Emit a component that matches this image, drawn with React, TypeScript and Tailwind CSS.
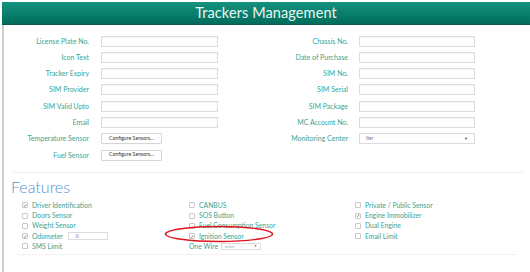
import React from "react";

const leftFields = [
  "License Plate No.",
  "Icon Text",
  "Tracker Expiry",
  "SIM Provider",
  "SIM Valid Upto",
  "Email",
];

const rightFields = [
  "Chassis No.",
  "Date of Purchase",
  "SIM No.",
  "SIM Serial",
  "SIM Package",
  "MC Account No.",
];

function Check({ checked }: { checked?: boolean }) {
  return (
    <span className="w-[6px] h-[6px] border border-[#c9c9c9] rounded-[1px] bg-white flex items-center justify-center shrink-0">
      {checked && (
        <svg width="5" height="5" viewBox="0 0 10 10">
          <path d="M1.5 5.5 L4 8 L8.5 2" fill="none" stroke="#555" strokeWidth="1.6" />
        </svg>
      )}
    </span>
  );
}

function Feature({ label, checked, children }: { label: string; checked?: boolean; children?: React.ReactNode }) {
  return (
    <div className="h-[10.3px] flex items-center gap-[4px]">
      <Check checked={checked} />
      <span className="text-[6.8px] text-[#3aa493] leading-none">{label}</span>
      {children}
    </div>
  );
}

function Label({ text, w }: { text: string; w: string }) {
  return (
    <span className={`${w} text-right text-[7px] leading-none text-[#3aa493] shrink-0`}>{text}</span>
  );
}

export default function App() {
  return (
    <div className="w-[530px] h-[272px] bg-white overflow-hidden font-['Lato','Liberation_Sans',sans-serif] pt-[2px] pl-[2px]">
      {/* Header */}
      <div className="h-[23px] bg-gradient-to-b from-[#14937f] to-[#026c5c] border-b-[1.5px] border-[#0a5a50] flex items-center justify-center">
        <h1 className="text-[14.5px] text-[#eaf6f3] leading-none tracking-[0.1px]">Trackers Management</h1>
      </div>

      <div className="border-l-2 border-[#cfcfcf] h-[250px] relative">
        {/* Form */}
        <div className="flex pt-[10.5px]">
          <div className="w-[216px] flex flex-col gap-y-[5.3px]">
            {leftFields.map((f) => (
              <div key={f} className="flex items-center h-[11px]">
                <Label text={f} w="w-[85px]" />
                <div className="ml-[12px] w-[117px] h-[11px] border border-[#dcdcdc] shadow-[inset_0_1px_1px_rgba(0,0,0,0.05)]" />
              </div>
            ))}
            {["Temperature Sensor", "Fuel Sensor"].map((f) => (
              <div key={f} className="flex items-center h-[11px]">
                <Label text={f} w="w-[85px]" />
                <button className="ml-[12px] w-[61px] h-[11px] border border-[#d5d5d5] rounded-[1px] bg-white text-[5.2px] text-[#333] leading-none">
                  Configure Sensors...
                </button>
              </div>
            ))}
          </div>
          <div className="flex flex-col gap-y-[5.3px]">
            {rightFields.map((f) => (
              <div key={f} className="flex items-center h-[11px]">
                <Label text={f} w="w-[128px]" />
                <div className="ml-[11px] w-[116px] h-[11px] border border-[#dcdcdc] shadow-[inset_0_1px_1px_rgba(0,0,0,0.05)]" />
              </div>
            ))}
            <div className="flex items-center h-[11px]">
              <Label text="Monitoring Center" w="w-[128px]" />
              <div className="ml-[11px] w-[116px] h-[11px] border border-[#dcdcdc] flex items-center justify-between px-[6px]">
                <span className="text-[5px] text-[#777] leading-none">Iter</span>
                <span className="text-[4px] text-[#444] leading-none">▼</span>
              </div>
            </div>
          </div>
        </div>

        {/* Separator */}
        <div className="mt-[11px] ml-[8px] w-[512px] border-t border-[#efefef]" />

        {/* Features */}
        <h2 className="ml-[7px] mt-[6px] text-[16px] leading-none text-[#4f93d2] font-light">Features</h2>

        <div className="mt-[5.5px] grid grid-cols-[167px_166px_1fr] pl-[18px]">
          <div className="flex flex-col">
            <Feature label="Driver Identification" checked />
            <Feature label="Doors Sensor" />
            <Feature label="Weight Sensor" />
            <Feature label="Odometer" checked>
              <span className="ml-[1px] w-[40px] h-[8.5px] border border-[#dcdcdc] flex items-center pl-[7px] text-[5px] text-[#777] leading-none">0</span>
            </Feature>
            <Feature label="SMS Limit" />
          </div>
          <div className="flex flex-col relative">
            <Feature label="CANBUS" />
            <Feature label="SOS Button" />
            <Feature label="Fuel Consumption Sensor" />
            <Feature label="Ignition Sensor" checked />
            <div className="h-[10.3px] flex items-center gap-[3px]">
              <span className="text-[6.8px] text-[#3aa493] leading-none">One Wire</span>
              <div className="w-[40px] h-[6.5px] border border-[#dcdcdc] flex items-center justify-between px-[3px]">
                <span className="text-[3.6px] text-[#999] leading-none">select</span>
                <span className="text-[3px] text-[#444] leading-none">▼</span>
              </div>
            </div>
            {/* highlight ellipse */}
            <svg className="absolute left-[-25px] top-[24.5px]" width="110" height="18" viewBox="0 0 110 18">
              <ellipse cx="55" cy="9" rx="53.5" ry="7.5" fill="none" stroke="#e0141e" strokeWidth="1.4" />
            </svg>
          </div>
          <div className="flex flex-col">
            <Feature label="Private / Public Sensor" />
            <Feature label="Engine Immobilizer" checked />
            <Feature label="Dual Engine" />
            <Feature label="Email Limit" />
          </div>
        </div>

        <div className="mt-[2px] ml-[13px] w-[500px] border-t border-[#f2f2f2]" />
      </div>
    </div>
  );
}
